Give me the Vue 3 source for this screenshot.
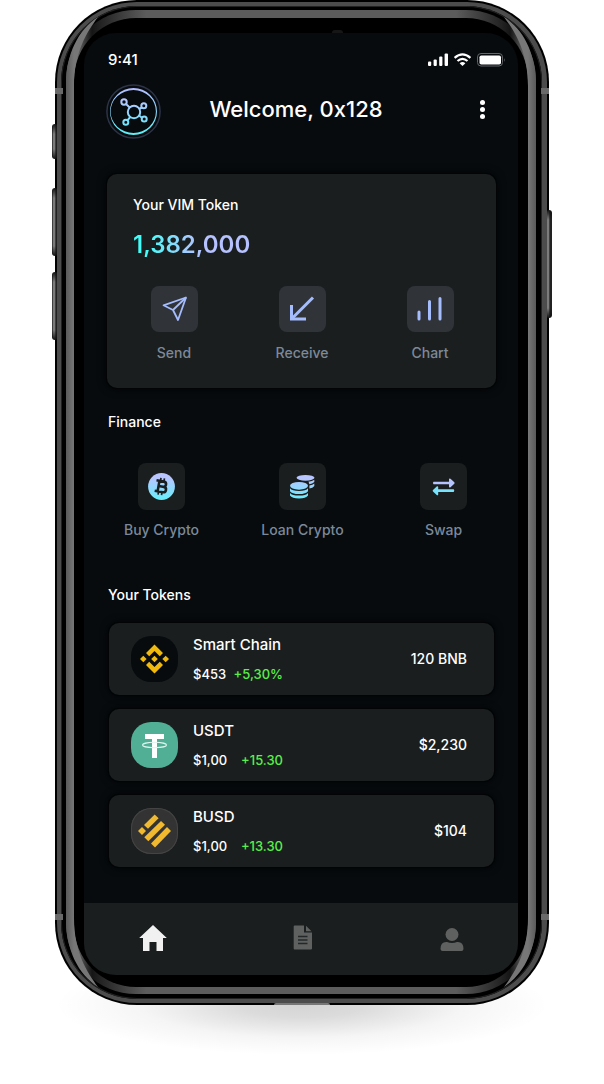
<script setup>
const tokens = [
  { id: 'bnb', name: 'Smart Chain', price: '$453', change: '+5,30%', amount: '120 BNB' },
  { id: 'usdt', name: 'USDT', price: '$1,00', change: '+15.30', amount: '$2,230' },
  { id: 'busd', name: 'BUSD', price: '$1,00', change: '+13.30', amount: '$104' },
]
const corners = ['tl', 'tr', 'bl', 'br']
</script>

<template>
  <div class="page">
    <div class="phone">
      <span class="key key-mute"></span>
      <span class="key key-up"></span>
      <span class="key key-down"></span>
      <span class="key key-power"></span>
      <div class="rim">
        <div class="groove">
          <div class="bevel">
            <div class="glass">
              <main class="screen">
                <div class="status">
                  <span class="time">9:41</span>
                  <svg class="status-icons" width="78" height="16" viewBox="0 0 78 16" aria-hidden="true">
                    <g fill="#fff">
                      <rect x="0" y="9.500" width="3.200" height="4.500" rx="1" />
                      <rect x="5.600" y="7.500" width="3.200" height="6.500" rx="1" />
                      <rect x="11.200" y="4.500" width="3.200" height="9.500" rx="1" />
                      <rect x="16.600" y="1.500" width="3.400" height="12.500" rx="1" />
                      <path d="M34.500 14 L31.600 11.200 Q34.500 8.900 37.400 11.200 Z" />
                      <rect x="51.500" y="3.500" width="21.500" height="9" rx="1.800" />
                    </g>
                    <g fill="none" stroke="#fff" stroke-width="2.200">
                      <path d="M26.600 5.900 Q34.500 -1 42.400 5.900" />
                      <path d="M29.500 9 Q34.500 4.600 39.500 9" />
                    </g>
                    <rect x="49.500" y="1.500" width="25" height="12.500" rx="3.500" fill="none" stroke="#63676a" />
                    <path d="M76 6v4q1.600-2 0-4z" fill="#63676a" />
                  </svg>
                </div>

                <header class="header">
                  <svg class="logo" width="55" height="55" viewBox="0 0 55 55" aria-hidden="true">
                    <defs>
                      <linearGradient id="ice" x1="0" y1="4" x2="0" y2="51" gradientUnits="userSpaceOnUse">
                        <stop offset="0.250" stop-color="#b8c5ff" />
                        <stop offset="0.800" stop-color="#6be6fa" />
                      </linearGradient>
                      <linearGradient id="ring" x1="0" y1="4" x2="0" y2="51" gradientUnits="userSpaceOnUse">
                        <stop offset="0" stop-color="#b4bdff" />
                        <stop offset="1" stop-color="#5cf0f5" />
                      </linearGradient>
                    </defs>
                    <circle cx="27.500" cy="27.500" r="26.600" fill="none" stroke="#2c3346" stroke-width="1.500" />
                    <path fill="url(#ring)" fill-rule="evenodd" d="M27.500 4a23.500 23.500 0 1 1 0 47a23.500 23.500 0 1 1 0-47zM27.500 6a22.900 21.500 0 0 0-22.900 21.500a22.900 21.500 0 0 0 22.900 21.500a22.400 21.500 0 0 0 22.400-21.500a22.400 21.500 0 0 0-22.400-21.500z" />
                    <g fill="none" stroke="url(#ice)" stroke-width="2">
                      <circle cx="28" cy="28" r="6.200" />
                      <circle cx="18" cy="18" r="2.700" />
                      <circle cx="37.800" cy="21.800" r="2.500" />
                      <circle cx="19.800" cy="38.300" r="2.500" />
                      <circle cx="38.200" cy="35" r="2.500" />
                      <path d="M20 20L23.700 23.500M36 23.500L33 25M21.400 36.300L24.300 33M36 33.700L33 31.500" />
                    </g>
                  </svg>
                  <h1 class="title">Welcome, 0x128</h1>
                  <button class="more" aria-label="More options" type="button"><i></i><i></i><i></i></button>
                </header>

                <section class="balance">
                  <h2 class="heading">Your VIM Token</h2>
                  <p class="total">1,382,000</p>
                  <div class="actions">
                    <button class="action" type="button">
                      <span class="tile lit">
                        <svg width="46" height="46" viewBox="0 0 46 46" fill="none" stroke="#a5bcfd" stroke-width="1.800" stroke-linejoin="round" aria-hidden="true">
                          <path d="M35 11.500L12.500 19.300L22 24L27 34Z" />
                          <path d="M35 11.500L22 24" />
                        </svg>
                      </span>
                      <span>Send</span>
                    </button>
                    <button class="action" type="button">
                      <span class="tile lit">
                        <svg width="46" height="46" viewBox="0 0 46 46" fill="none" stroke="#a5bcfd" stroke-width="3" aria-hidden="true">
                          <path d="M34 11.500L13 32.500" />
                          <path d="M12.500 19V33H27" />
                        </svg>
                      </span>
                      <span>Receive</span>
                    </button>
                    <button class="action" type="button">
                      <span class="tile lit">
                        <svg width="46" height="46" viewBox="0 0 46 46" fill="none" stroke="#a5bcfd" stroke-width="3" stroke-linecap="round" aria-hidden="true">
                          <path d="M12 26V33M22.500 15.500V33M33 12.500V33" />
                        </svg>
                      </span>
                      <span>Chart</span>
                    </button>
                  </div>
                </section>

                <h2 class="heading finance-heading">Finance</h2>
                <div class="finance">
                  <button class="action" type="button">
                    <span class="tile">
                      <svg width="47" height="47" viewBox="0 0 47 47" aria-hidden="true">
                        <defs>
                          <linearGradient id="cool" x1="0" y1="11" x2="0" y2="36" gradientUnits="userSpaceOnUse">
                            <stop offset="0.150" stop-color="#b8c5ff" />
                            <stop offset="1" stop-color="#68edfb" />
                          </linearGradient>
                        </defs>
                        <circle cx="23.500" cy="23.500" r="13.400" fill="url(#cool)" />
                        <g transform="rotate(10 23.500 23.500)" fill="none" stroke="#1b1e1e" stroke-width="2.600">
                          <path d="M17.500 18.300H25a2.500 2.500 0 0 1 0 5.200H20.500M25 23.500h.8a2.700 2.700 0 0 1 0 5.400H17.500M20.500 18.300V29" />
                          <path stroke-width="1.700" d="M21.500 15V18M25 15V18M21.500 29V32M25 29V32" />
                        </g>
                      </svg>
                    </span>
                    <span>Buy Crypto</span>
                  </button>
                  <button class="action" type="button">
                    <span class="tile">
                      <svg width="47" height="47" viewBox="0 0 47 47" fill="url(#cool)" aria-hidden="true">
                        <ellipse cx="26.500" cy="14.800" rx="9" ry="2.900" />
                        <path d="M29.300 18.800Q33.500 18.300 35.300 16.800V19Q33.500 20.900 30.200 21.200Q30.300 19.600 29.300 18.800Z" />
                        <path d="M30.400 22.500Q33.800 22 35.300 20.600V22.900Q33.800 25 30.400 25.600Z" />
                        <ellipse cx="20" cy="22.800" rx="9" ry="3.900" />
                        <path d="M11 25.300Q13 28 20 28T29 25.300V28.200Q27 31 20 31T11 28.200Z" />
                        <path d="M11 29.900Q13 32.500 20 32.500T29 29.900V32.500Q27 35.400 20 35.400T11 32.500Z" />
                      </svg>
                    </span>
                    <span>Loan Crypto</span>
                  </button>
                  <button class="action" type="button">
                    <span class="tile">
                      <svg width="47" height="47" viewBox="0 0 47 47" aria-hidden="true">
                        <path fill="#b5c4ff" d="M13.500 18.700H29V16.200Q29.200 14.800 30.500 15.800L34.300 19.300Q35 20 34.300 20.700L30.500 24.200Q29.200 25 29 23.800V21.200H13.500Q12.300 20 13.500 18.700Z" />
                        <path fill="#78e2fc" d="M33.700 26.300H18.200V24Q18 22.800 16.700 23.600L13 27Q12.300 27.700 13 28.400L16.700 31.900Q18 32.800 18.200 31.400V28.900H33.700Q34.900 27.600 33.700 26.300Z" />
                      </svg>
                    </span>
                    <span>Swap</span>
                  </button>
                </div>

                <h2 class="heading tokens-heading">Your Tokens</h2>
                <ul class="tokens">
                  <li v-for="t in tokens" :key="t.id" class="token">
                    <span class="coin" :class="t.id">
                      <svg width="47" height="46" viewBox="0 0 47 46" aria-hidden="true">
                        <g v-if="t.id === 'bnb'" fill="#f0b90b">
                          <path d="M23.500 8.500L32 17L28.800 20.200L23.500 15L18.200 20.200L15 17Z" />
                          <path d="M23.500 37.500L32 29L28.800 25.800L23.500 31L18.200 25.800L15 29Z" />
                          <path d="M23.500 19.700L26.800 23L23.500 26.300L20.200 23Z" />
                          <path d="M12.300 19.700L15.600 23L12.300 26.300L9 23Z" />
                          <path d="M34.700 19.700L38 23L34.700 26.300L31.400 23Z" />
                        </g>
                        <g v-else-if="t.id === 'usdt'">
                          <path fill="#fff" d="M14 12H33V17H26V36H21V17H14Z" />
                          <ellipse cx="23.500" cy="23" rx="12" ry="2.700" fill="none" stroke="#dff4ed" stroke-width="1.100" />
                          <path d="M21 21.500H26V25H21Z" fill="#fff" />
                        </g>
                        <g v-else fill="#f0b92f">
                          <path d="M23.700 6.500L27.600 10.300L17 20.700L13 17Z" />
                          <path d="M30 13L34 16.800L17.300 33.300L13.300 29.300Z" />
                          <path d="M36 19L40 23L24 39.500L20 35.500Z" />
                          <path d="M11 19L15 23L11 27L7 23Z" />
                        </g>
                      </svg>
                    </span>
                    <div class="info">
                      <span class="name">{{ t.name }}</span>
                      <div class="quote"><span>{{ t.price }}</span><span class="change">{{ t.change }}</span></div>
                    </div>
                    <span class="amount">{{ t.amount }}</span>
                  </li>
                </ul>

                <nav class="tabs">
                  <a class="tab" href="#home" aria-label="Home">
                    <svg width="28" height="28" viewBox="0 0 28 28" fill="#f1f1f1" aria-hidden="true"><path d="M14 1L27.800 14H24V27H17.500V18H10.500V27H4V14H0.200Z" /></svg>
                  </a>
                  <a class="tab" href="#activity" aria-label="Activity">
                    <svg width="28" height="28" viewBox="0 0 28 28" aria-hidden="true">
                      <path fill="#5f6160" d="M5.500 1.500H15V8.500H23V24.500Q23 25.500 22 25.500H5.500Q4.700 25.500 4.700 24.500V2.500Q4.700 1.500 5.500 1.500ZM17 1.800L22.500 7.200H17Z" />
                      <path stroke="#252828" stroke-width="1.400" d="M9 12.500H18.500M9 16H18.500M9 19.500H18.500" />
                    </svg>
                  </a>
                  <a class="tab" href="#profile" aria-label="Profile">
                    <svg width="28" height="28" viewBox="0 0 28 28" fill="#5f6160" aria-hidden="true">
                      <circle cx="14" cy="10.500" r="6.500" />
                      <path d="M9 18Q14 20 19 18Q25.500 17.500 25.500 25Q25.300 27 23.500 27H4.500Q2.700 27 2.500 25Q2.500 17.500 9 18Z" />
                    </svg>
                  </a>
                </nav>
              </main>
            </div>
            <svg v-for="c in corners" :key="c" class="shine" :class="c" width="34" height="76" viewBox="0 0 34 76" aria-hidden="true">
              <defs>
                <linearGradient :id="'shine-' + c" x1="0" y1="0" x2="8" y2="0" gradientUnits="userSpaceOnUse">
                  <stop offset="0" stop-color="#5a5a5a" />
                  <stop offset="1" stop-color="#777" />
                </linearGradient>
              </defs>
              <path :fill="`url(#shine-${c})`" d="M0 76C0 44 12 20 32 7C21 22 8 42 8 76Z" />
            </svg>
          </div>
        </div>
      </div>
      <span class="band band-top-left"></span>
      <span class="band band-top-right"></span>
      <span class="band band-bottom-left"></span>
      <span class="band band-bottom-right"></span>
      <span class="sensor"></span>
      <span class="port"></span>
    </div>
    <div class="shadow"></div>
  </div>
</template>

<style>
body {
  background: #fff;
}
</style>

<style scoped>
.page {
  padding: 0 55px;
  font-family: Inter, "Liberation Sans", sans-serif;
  font-size: 14px;
  font-weight: 500;
  line-height: 20px;
  color: #fff;
}
.phone {
  position: relative;
  z-index: 1;
  padding: 2px;
  border-radius: 82px;
  background: #000;
}
.rim {
  padding: 4px 5px 4px 4px;
  border-radius: 80px;
  background: #4c4c4c;
}
.groove {
  padding: 4px 6px 5px 5px;
  border-radius: 76px;
  background: #000;
  box-shadow: inset 0 0 0 1px #222;
}
.bevel {
  position: relative;
  padding: 8px 8px 7px;
  border-radius: 70px;
  background: linear-gradient(to right, #5a5a5a, #777 8px, #151515 26px, #222 34px, #5c5c5c 80px, #5c5c5c calc(100% - 80px), #222 calc(100% - 34px), #151515 calc(100% - 26px), #777 calc(100% - 8px), #5a5a5a);
}
.glass {
  padding: 15px 10px 12px;
  border-radius: 62px;
  background: #000;
}
.shine {
  position: absolute;
}
.tl { left: 0; top: 0; }
.tr { right: 0; top: 0; transform: scaleX(-1); }
.bl { left: 0; bottom: 0; transform: scaleY(-1); }
.br { right: 0; bottom: 0; transform: scale(-1); }
.key {
  position: absolute;
  left: -3px;
  z-index: -1;
  width: 6px;
  border-radius: 3px;
  background: linear-gradient(#111, transparent 10px, transparent calc(100% - 10px), #111), linear-gradient(to right, #222, #999 2px, #222 4px);
}
.key-mute { top: 124px; height: 35px; }
.key-up { top: 188px; height: 68px; }
.key-down { top: 272px; height: 68px; }
.key-power { left: auto; right: -3px; top: 210px; height: 108px; }
.band {
  position: absolute;
  width: 8px;
  height: 6px;
  background: #696969;
}
.band-top-left { left: 0; top: 88px; }
.band-top-right { right: 0; top: 88px; }
.band-bottom-left { left: 0; bottom: 85px; }
.band-bottom-right { right: 0; bottom: 85px; }
.sensor {
  position: absolute;
  left: 56%;
  top: 30px;
  width: 11px;
  height: 3px;
  border-radius: 6px 6px 0 0;
  background: #161616;
}
.port {
  position: absolute;
  left: calc(50% - 28px);
  bottom: 0;
  width: 56px;
  height: 2px;
  border-radius: 4px 4px 0 0;
  background: #777;
}
.shadow {
  height: 100px;
  margin-top: -50px;
  background: radial-gradient(closest-side, rgba(0, 0, 0, 0.17), rgba(0, 0, 0, 0.14) 25%, rgba(0, 0, 0, 0.04) 65%, transparent);
}

.screen {
  overflow: hidden;
  border-radius: 32px;
  background: #070b0e;
}
.status {
  display: flex;
  justify-content: space-between;
  align-items: center;
  padding: 17px 12px 14px 24px;
}
.time {
  font-size: 15px;
}
.header {
  display: grid;
  grid-template-columns: 1fr auto 1fr;
  align-items: center;
  margin: 0 32px 35px 22px;
}
.title {
  margin: 0 0 6px;
  font-size: 22px;
  font-weight: 500;
  line-height: 28px;
}
.more {
  display: flex;
  flex-direction: column;
  justify-self: end;
  gap: 2px;
  width: 8px;
  margin-bottom: 4px;
  padding: 0;
  align-items: center;
  border: 0;
  background: none;
}
.more i {
  width: 5px;
  height: 5px;
  border-radius: 50%;
  background: #fff;
}
.balance {
  margin: 0 22px 0 23px;
  padding: 21px 2px 25px 3px;
  border-radius: 10px;
  background: #1b1e1e;
  box-shadow: 0 0 0 1px #020405, 0 0 10px #000;
}
.heading {
  margin: 0;
  font-size: 14px;
  font-weight: 500;
}
.balance .heading,
.total {
  margin-left: 23px;
}
.total {
  width: max-content;
  margin-top: 14px;
  margin-bottom: 25px;
  font-size: 24px;
  font-weight: 600;
  line-height: 32px;
  background: linear-gradient(to right, #45fdf8 12%, #9fcdff 45%, #b6c2ff 62%);
  background-clip: text;
  color: transparent;
}
.actions,
.finance {
  display: grid;
  grid-template-columns: repeat(3, 1fr);
}
.finance {
  padding: 0 4px 0 7px;
}
.action {
  display: flex;
  flex-direction: column;
  align-items: center;
  gap: 10px;
  padding: 0;
  border: 0;
  background: none;
  font: inherit;
  color: #7b899a;
}
.balance .action {
  gap: 11px;
}
.tile {
  display: grid;
  place-items: center;
  width: 47px;
  height: 47px;
  border-radius: 8px;
  background: #1b1e1e;
}
.lit {
  height: 46px;
  background: #303439;
}
.finance-heading {
  margin: 24px 24px 31px;
}
.tokens-heading {
  margin: 45px 24px 18px;
}
.tokens {
  display: grid;
  gap: 14px;
  margin: 0 24px 36px 25px;
  padding: 0;
  list-style: none;
}
.token {
  display: flex;
  align-items: center;
  height: 72px;
  padding: 0 27px 0 22px;
  border-radius: 10px;
  background: #1b1e1e;
  box-shadow: 0 0 0 1px #020405, 0 0 8px #000;
}
.coin {
  display: grid;
  place-items: center;
  width: 47px;
  height: 46px;
  margin-right: 15px;
  border-radius: 20px;
}
.bnb { background: #070b0e; }
.usdt { background: #50af95; }
.busd { background: #333; box-shadow: inset 0 0 0 1px #444; }
.info {
  display: grid;
  gap: 9px;
}
.name {
  font-size: 15px;
}
.quote {
  display: flex;
  justify-content: space-between;
  width: 90px;
  font-size: 13px;
}
.change {
  color: #58f04a;
}
.amount {
  margin-left: auto;
}
.tabs {
  display: flex;
  justify-content: space-between;
  padding: 21px 52px 23px 55px;
  background: #1b1e1e;
}
.tab,
.tab svg {
  display: block;
  height: 28px;
}
</style>
